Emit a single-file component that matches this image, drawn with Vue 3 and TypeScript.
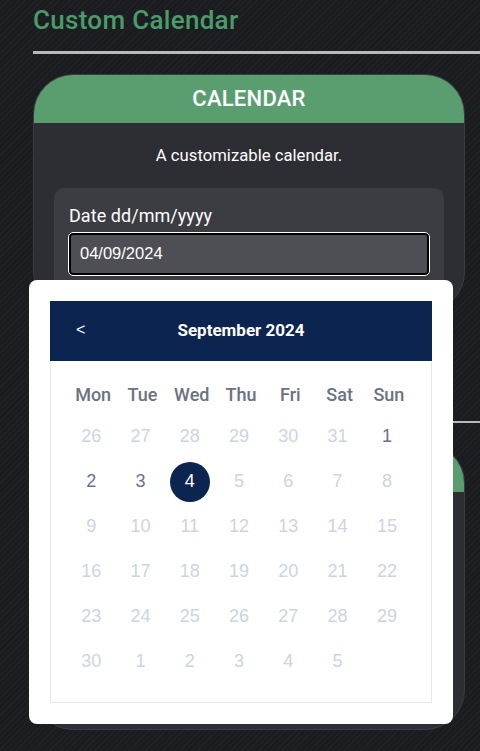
<script setup lang="ts">
const weekdays = ["Mon", "Tue", "Wed", "Thu", "Fri", "Sat", "Sun"];

type Day = { label: number | string; current: boolean; selected: boolean };

const selected = 4;
const days: Day[] = [];
for (const d of [26, 27, 28, 29, 30, 31]) days.push({ label: d, current: false, selected: false });
for (let d = 1; d <= 30; d++) days.push({ label: d, current: d <= selected, selected: d === selected });
for (const d of [1, 2, 3, 4, 5]) days.push({ label: d, current: false, selected: false });
</script>

<template>
  <div class="page">
    <section class="section">
      <h1 class="title">Custom Calendar</h1>
      <hr class="rule" />
      <div class="card">
        <div class="card-head">CALENDAR</div>
        <div class="card-body">
          <p class="intro">A customizable calendar.</p>
          <div class="field">
            <label class="field-label" for="date">Date dd/mm/yyyy</label>
            <input id="date" class="field-input" type="text" value="04/09/2024" />
          </div>
        </div>
      </div>
    </section>

    <section class="section second">
      <hr class="rule thin" />
      <div class="card tall">
        <div class="card-head"></div>
      </div>
    </section>

    <div class="popup">
      <div class="calendar">
        <div class="cal-head">
          <span class="prev">&lt;</span>
          <span class="month">September 2024</span>
        </div>
        <div class="weekdays">
          <span v-for="w in weekdays" :key="w">{{ w }}</span>
        </div>
        <div class="days">
          <span
            v-for="(d, i) in days"
            :key="i"
            class="day"
            :class="{ current: d.current, selected: d.selected }"
          >{{ d.label }}</span>
        </div>
      </div>
    </div>
  </div>
</template>

<style>
html,
body {
  margin: 0;
  height: 100%;
  overflow: hidden;
  background: #1c1d21;
}
</style>

<style scoped>
.page {
  position: relative;
  height: 751px;
  overflow: hidden;
  padding-left: 33px;
  box-sizing: border-box;
  font-family: Roboto, sans-serif;
  color: #fff;
  background-color: #1b1c20;
  background-image: repeating-linear-gradient(
    -45deg,
    #212226 0,
    #212226 1px,
    transparent 1px,
    transparent 4px
  );
}

.title {
  margin: 0;
  height: 51px;
  padding-top: 4px;
  box-sizing: border-box;
  font-size: 26px;
  font-weight: 500;
  line-height: 32px;
  color: #4c9b6a;
  letter-spacing: 0.3px;
}

.rule {
  margin: 0;
  height: 3px;
  border: 0;
  background: #b9b9b9;
}

.thin {
  height: 2px;
}

.card {
  margin: 20px 15px 0 0;
  height: 236px;
  background: #2d2e33;
  border: 1px solid #3c3d42;
  border-radius: 40px;
  overflow: hidden;
}

.tall {
  height: 285px;
}

.card-head {
  height: 48px;
  background: #5a9e70;
  font-size: 22px;
  font-weight: 500;
  line-height: 47px;
  letter-spacing: 0.25px;
  text-align: center;
}

.card-body {
  padding: 0 20px;
}

.intro {
  margin: 0;
  padding-top: 23px;
  font-size: 16.7px;
  line-height: 20px;
  text-align: center;
}

.field {
  margin-top: 22px;
  padding: 16px 14px 30px;
  background: #3c3d42;
  border-radius: 10px;
}

.field-label {
  display: block;
  font-size: 18px;
  line-height: 24px;
  margin-left: 1px;
  letter-spacing: 0.05px;
}

.field-input {
  display: block;
  width: 100%;
  height: 44px;
  margin-top: 4px;
  padding: 0 9px 2px;
  box-sizing: border-box;
  border: 3px solid #000;
  border-radius: 5px;
  outline: 1px solid #fff;
  outline-offset: -1px;
  background: #4e4f54;
  color: #fff;
  font-family: "Liberation Sans", sans-serif;
  font-size: 16.5px;
}

.second {
  margin-top: 109px;
}

.popup {
  position: absolute;
  left: 29px;
  top: 280px;
  width: 424px;
  height: 444px;
  box-sizing: border-box;
  padding: 21px;
  background: #fff;
  border-radius: 8px;
}

.calendar {
  height: 402px;
  box-sizing: border-box;
  border: 1px solid #e5e7eb;
  border-top: 0;
}

.cal-head {
  position: relative;
  margin: 0 -1px;
  height: 60px;
  background: #0b2550;
  display: flex;
  align-items: center;
  justify-content: center;
}

.prev {
  position: absolute;
  left: 26px;
  top: 20px;
  font-family: "Liberation Sans", sans-serif;
  font-size: 16px;
}

.month {
  font-size: 17px;
  font-weight: 700;
  margin-bottom: 2px;
}

.weekdays {
  display: grid;
  grid-template-columns: repeat(7, 49.3px);
  margin: 23px 0 0 17.5px;
  text-align: center;
  font-size: 18px;
  font-weight: 500;
  line-height: 22px;
  color: #6b7280;
}

.days {
  display: grid;
  grid-template-columns: repeat(7, 49.3px);
  grid-auto-rows: 40px;
  row-gap: 5px;
  margin: 11px 0 0 15.5px;
}

.day {
  justify-self: center;
  width: 40px;
  height: 40px;
  padding-bottom: 2px;
  box-sizing: border-box;
  border-radius: 50%;
  display: flex;
  align-items: center;
  justify-content: center;
  font-family: "Liberation Sans", sans-serif;
  font-size: 18px;
  color: #cbd5e1;
}

.current {
  color: #64748b;
}

.selected {
  background: #0b2550;
  color: #fff;
}
</style>
